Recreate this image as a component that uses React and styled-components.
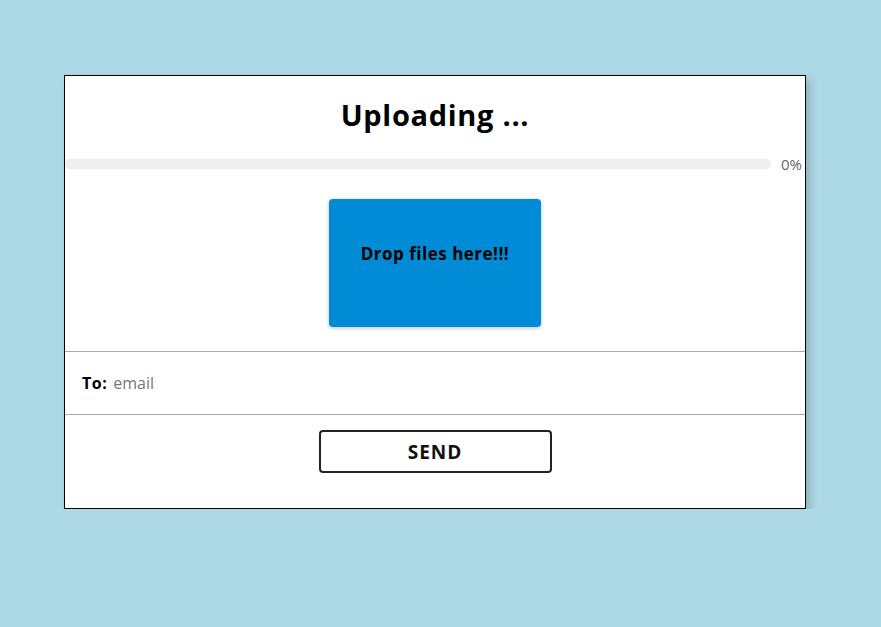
import React from 'react';
import styled, { createGlobalStyle } from 'styled-components';

const GlobalStyle = createGlobalStyle`
  html, body {
    margin: 0;
    padding: 0;
    background-color: lightblue;
    font-family: "Open Sans", "Noto Sans", sans-serif;
  }
`;

const Page = styled.div`
  padding: 75px 0 0 64px;
`;

const Card = styled.div`
  width: 740px;
  background-color: white;
  border: 1px solid black;
  box-shadow: 4px 4px 8px rgba(0, 0, 0, 0.18);
`;

const Title = styled.h2`
  margin: 0;
  padding: 20px 0 0;
  height: 63px;
  box-sizing: border-box;
  text-align: center;
  font-size: 29px;
  font-weight: 700;
  letter-spacing: 0.7px;
  line-height: 38px;
  color: black;
`;

const ProgressRow = styled.div`
  display: flex;
  align-items: center;
  height: 18px;
  margin-top: 16px;
`;

const Track = styled.div`
  flex: 1;
  height: 10px;
  border-radius: 5px;
  background-color: #eeeeee;
  overflow: hidden;
`;

const Fill = styled.div`
  height: 100%;
  background-color: #0288d1;
`;

const Percent = styled.span`
  width: 24px;
  margin-left: 10px;
  font-size: 15px;
  color: #666;
`;

const DropArea = styled.div`
  display: flex;
  justify-content: center;
  padding: 26px 0 24px;
  border-bottom: 1px solid #aaa;
`;

const DropZone = styled.div`
  width: 212px;
  height: 128px;
  box-sizing: border-box;
  padding-top: 43px;
  border-radius: 4px;
  background-color: #008bd6;
  box-shadow: 0 1px 4px rgba(0, 0, 0, 0.25);
  text-align: center;
  font-size: 17px;
  font-weight: 700;
  letter-spacing: 0.5px;
  color: black;
`;

const ToRow = styled.div`
  display: flex;
  align-items: center;
  height: 62px;
  padding: 0 17px;
  border-bottom: 1px solid #aaa;
`;

const ToLabel = styled.label`
  font-size: 16px;
  font-weight: 700;
  letter-spacing: 0.5px;
  color: black;
  margin-right: 6px;
`;

const EmailInput = styled.input`
  flex: 1;
  border: none;
  outline: none;
  padding: 0;
  font-family: inherit;
  font-size: 16px;
  &::placeholder {
    color: #777;
  }
`;

const Footer = styled.div`
  display: flex;
  justify-content: center;
  padding: 15px 0 35px;
`;

const SendButton = styled.button`
  width: 233px;
  height: 43px;
  border: 2px solid #222;
  border-radius: 4px;
  background-color: white;
  font-family: inherit;
  font-size: 19px;
  font-weight: 700;
  letter-spacing: 1px;
  color: #111;
  cursor: pointer;
`;

export default function App() {
  const progress = 0;
  return (
    <>
      <GlobalStyle />
      <Page>
        <Card>
          <Title>Uploading ...</Title>
          <ProgressRow>
            <Track>
              <Fill style={{ width: `${progress}%` }} />
            </Track>
            <Percent>{progress}%</Percent>
          </ProgressRow>
          <DropArea>
            <DropZone>Drop files here!!!</DropZone>
          </DropArea>
          <ToRow>
            <ToLabel>To:</ToLabel>
            <EmailInput type="email" placeholder="email" />
          </ToRow>
          <Footer>
            <SendButton>SEND</SendButton>
          </Footer>
        </Card>
      </Page>
    </>
  );
}
